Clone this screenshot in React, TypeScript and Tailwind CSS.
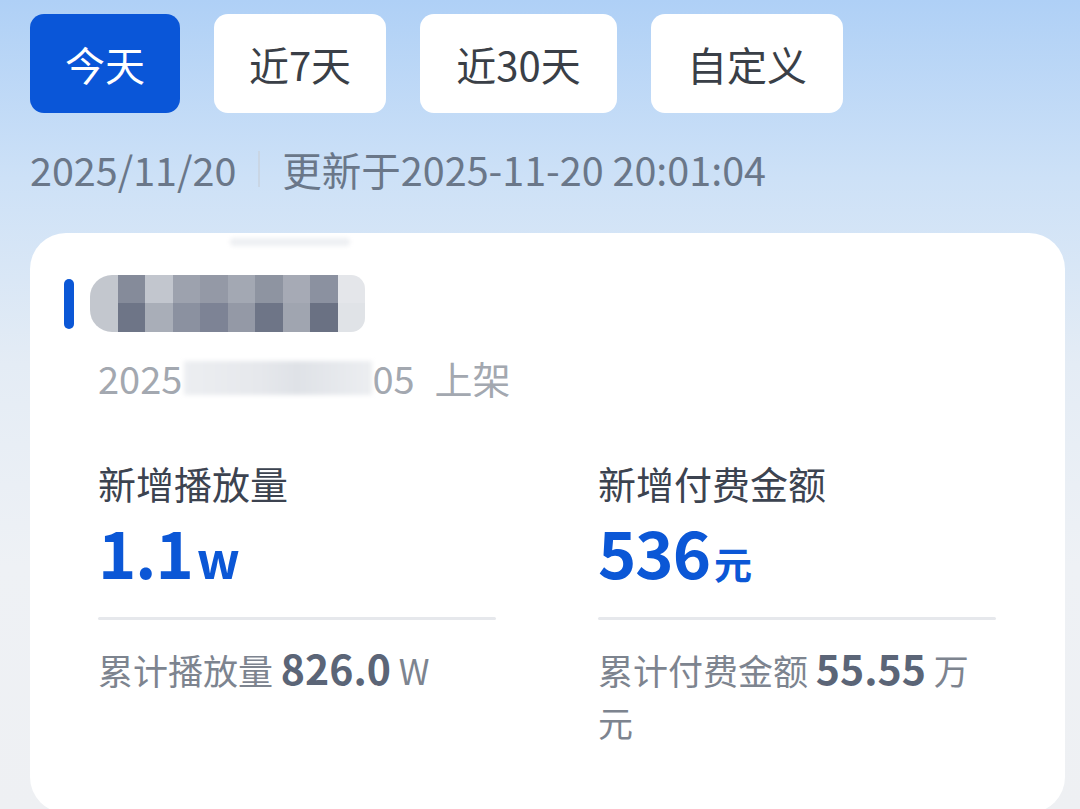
import type { ReactNode } from 'react'

const ranges = ['今天', '近7天', '近30天', '自定义']
const rangeWidths = ['w-[150px]', 'w-[172px]', 'w-[197px]', 'w-[192px]']

// mosaic that hides the title
const mosaicTop = ['#c3c7ce', '#858b9a', '#c2c6ce', '#9da2ae', '#9499a6', '#a3a8b3', '#8e94a1', '#a6aab5', '#8b91a0', '#e4e6ea']
const mosaicBottom = ['#c3c7ce', '#6e7587', '#a9aeb8', '#8b91a0', '#7d8395', '#9499a6', '#6e7587', '#a0a5b0', '#6a7183', '#e0e3e7']

function Stat({
  label,
  value,
  unit,
  total,
  totalUnit,
}: {
  label: string
  value: string
  unit: ReactNode
  total: string
  totalUnit: string
}) {
  return (
    <div className="flex w-[398px] flex-col">
      <div className="text-[38px] leading-[48px] text-[#3c4350]">{label}</div>
      <div className="mt-[8px] flex h-[72px] items-baseline leading-[72px] text-[#0b57d6]">
        <span className="text-[65px] font-bold tracking-[-1px]">{value}</span>
        {unit}
      </div>
      <div className="mt-[30px] h-[3px] w-full rounded bg-[#e6e8ec]" />
      <div className="mt-[24px] text-[35px] leading-[52px] text-[#7d848f]">
        {label.replace('新增', '累计')}{' '}
        <span className="text-[41px] leading-none font-bold text-[#5b6577]">{total}</span>{' '}
        {totalUnit}
      </div>
    </div>
  )
}

export default function App() {
  return (
    <div
      className="h-[809px] w-[1080px] overflow-hidden bg-[linear-gradient(180deg,#afd0f6_0%,#cde1f7_22%,#e4ecf5_45%,#eef1f5_70%,#eef0f3_100%)] pl-[30px] pr-[15px] pt-[14px]"
      style={{ fontFamily: '"Noto Sans CJK SC", "Noto Sans", sans-serif' }}
    >
      <div className="flex gap-[34px]">
        {ranges.map((r, i) => (
          <div
            key={r}
            className={`flex h-[99px] items-center justify-center rounded-[14px] text-[40px] ${rangeWidths[i]} ${
              i === 0 ? 'bg-[#0a56d8] text-white' : 'bg-white text-[#3a3f47]'
            }`}
          >
            {r}
          </div>
        ))}
      </div>

      <div className="mt-[32px] flex items-center text-[39.5px] leading-[48px] text-[#6a7789]">
        <span>2025/11/20</span>
        <span className="mx-[22px] h-[36px] w-[2px] bg-[#c9d6e5]" />
        <span>更新于2025-11-20 20:01:04</span>
      </div>

      <div className="relative mt-[40px] h-[580px] rounded-[36px] bg-white pl-[34px] pt-[42px]">
        <div className="absolute left-[200px] top-[5px] h-[8px] w-[120px] rounded-full bg-[#eef0f3] blur-[2px]" />

        <div className="flex h-[57px] items-center">
          <div className="h-[50px] w-[10px] rounded-full bg-[#0b57d6]" />
          <div className="ml-[16px] flex flex-col overflow-hidden rounded-l-[22px] rounded-r-[14px] blur-[0.6px]">
            <div className="flex">
              {mosaicTop.map((c, i) => (
                <div key={i} className="h-[28px] w-[27.5px]" style={{ background: c }} />
              ))}
            </div>
            <div className="flex">
              {mosaicBottom.map((c, i) => (
                <div key={i} className="h-[29px] w-[27.5px]" style={{ background: c }} />
              ))}
            </div>
          </div>
        </div>

        <div className="mt-[22px] flex items-center pl-[34px] text-[38px] leading-[48px] text-[#a3a8b0]">
          <span>2025</span>
          <span className="ml-[2px] h-[34px] w-[188px] bg-[linear-gradient(90deg,#eceef1,#e6e8ec_40%,#dfe2e7_60%,#eceef1)] blur-[2px]" />
          <span>05</span>
          <span className="ml-[20px]">上架</span>
        </div>

        <div className="mt-[57px] flex gap-[102px] pl-[34px]">
          <Stat
            label="新增播放量"
            value="1.1"
            unit={<span className="ml-[4px] text-[50px] font-bold">w</span>}
            total="826.0"
            totalUnit="W"
          />
          <Stat
            label="新增付费金额"
            value="536"
            unit={<span className="ml-[4px] text-[38px] font-bold">元</span>}
            total="55.55"
            totalUnit="万元"
          />
        </div>
      </div>
    </div>
  )
}
